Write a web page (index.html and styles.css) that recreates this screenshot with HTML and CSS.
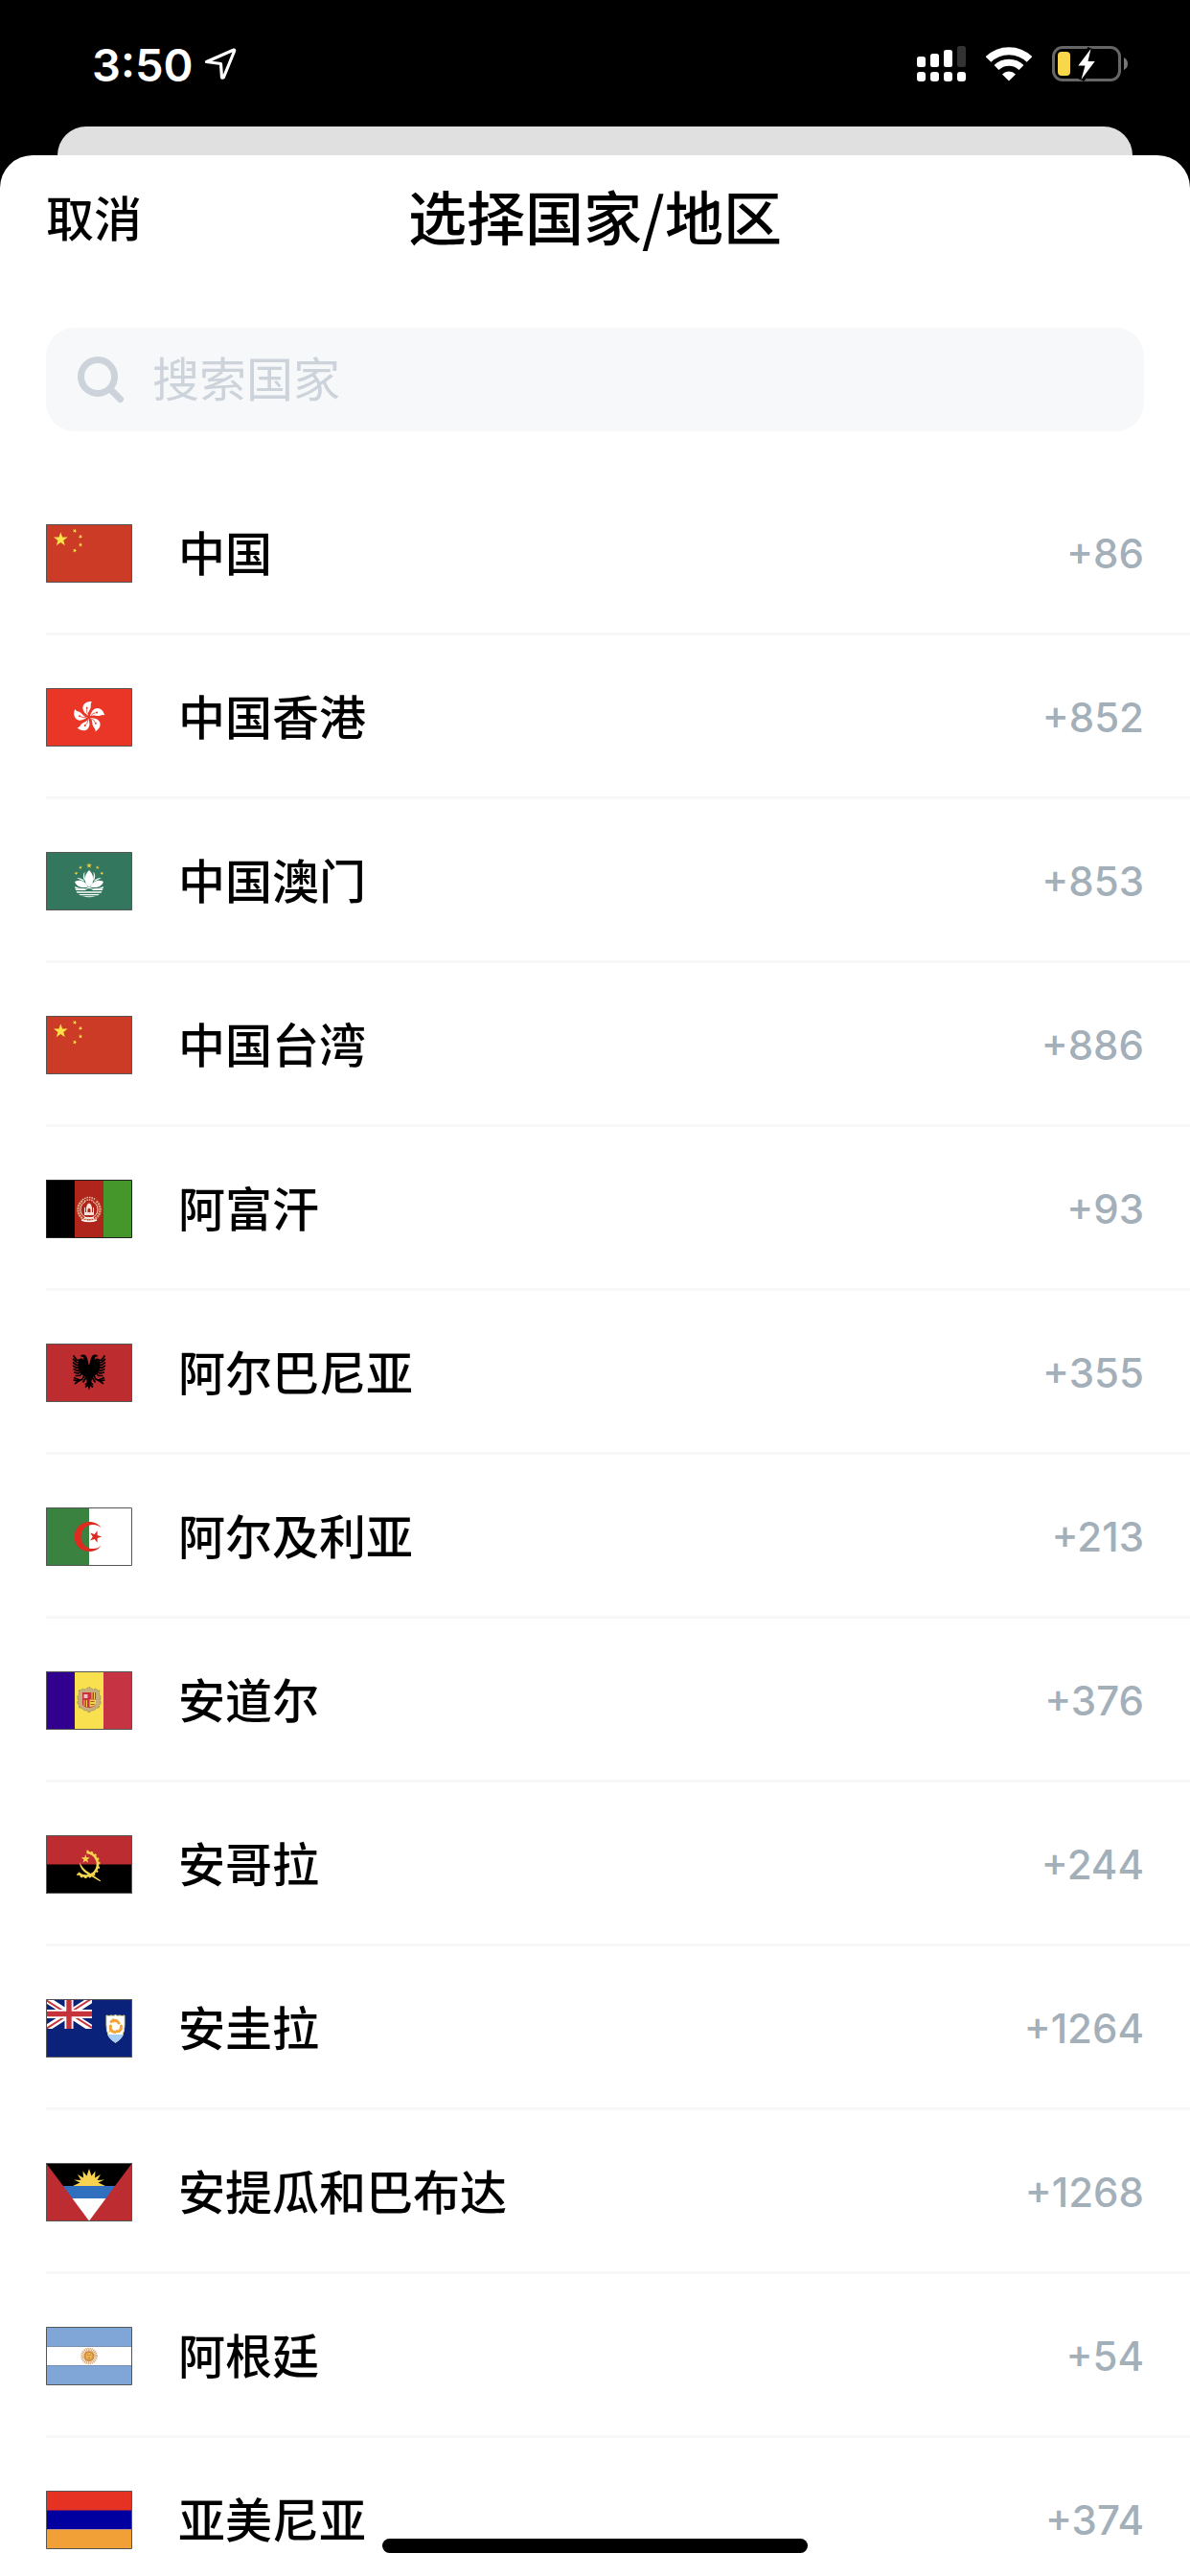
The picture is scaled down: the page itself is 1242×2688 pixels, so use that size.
FILE: index.html
```html
<!DOCTYPE html>
<html lang="zh-CN">
<head>
  <meta charset="UTF-8">
  <meta name="viewport" content="width=device-width, initial-scale=1.0">
  <title>选择国家/地区</title>
  <link rel="stylesheet" href="styles.css">
</head>
<body>
  <!-- shared shapes for the flags -->
  <svg class="defs" aria-hidden="true">
    <defs>
      <path id="star" d="M0-10 2.35-3.24 9.51-3.09 3.8 1.24 5.88 8.09 0 4-5.88 8.09-3.8 1.24-9.51-3.09-2.35-3.24z"/>
      <g id="flag-cn">
        <path fill="#cb3b25" d="M0 0h90v61H0z"/>
        <g fill="#fbdf4b">
          <use href="#star" transform="translate(15.3 16) scale(.77)"/>
          <use href="#star" transform="translate(30 7) rotate(25) scale(.24)"/>
          <use href="#star" transform="translate(36 13) rotate(45) scale(.24)"/>
          <use href="#star" transform="translate(36 21.5) scale(.24)"/>
          <use href="#star" transform="translate(30 27.5) rotate(20) scale(.24)"/>
        </g>
      </g>
      <g id="petal">
        <path fill="#fff" d="M-.500-1.500C-3.500-3.500-7.500-7-6-11.500-4.500-15.500-.5-16.500 3.300-16.300 1.200-14 2.600-12 1.800-9.500 1-7-1.500-5-.5-1.500z"/>
        <path fill="none" stroke="#e93626" stroke-width=".7" d="M-.800-2.500Q-3-5-2-9"/>
        <circle cx="-2" cy="-9.500" r="1" fill="#e93626"/>
      </g>
      <g id="eagle-half">
        <path d="M0-7.500C-1-9-1-14-3.500-17.500-5-19-8-18.800-9.500-17L-6.500-16-5.500-13-8-14.800-11-13.500-11.500-8C-11.500-2-8 3-3.500 5L-1.500 13 0 19z"/>
        <path fill="none" stroke="#000" stroke-width="1.700" d="M-9-12-13-13-16.500-17.500M-9-10-13-10.500-17-14M-9-8-13-7.500-17-10.500M-9-6-13-4.500-17-7M-9-4-12-1.500-16.500-3.500M-8-2-11 1-16 0M-7 0-9.500 3.500-14.500 3.500M-4 2-7 7-11 9-16.500 8M-11 9-15 12M-10 8-16 5.500M-3 5-6.500 10.500M0 9-4 13M0 12-4 15.500"/>
      </g>
      <path id="frame" fill="none" stroke="#555" stroke-width="1" d="M.5.5h89v60H.5z"/>
    </defs>
  </svg>

  <div class="status-bar">
    <div class="status-left">
      <span class="time">3:50</span>
      <svg width="34" height="34" viewBox="0 0 34 34" aria-hidden="true">
        <path d="M31 2 2.500 14.500 17.500 16.500 18.500 31Q19.500 31.500 20.500 30.500L31.500 3.500Q32 2 31 2z" fill="none" stroke="#fff" stroke-width="3.200" stroke-linejoin="round"/>
      </svg>
    </div>
    <div class="status-right">
      <svg width="51" height="38" viewBox="0 0 51 38" fill="#fff" aria-hidden="true">
        <rect x="0" y="11" width="9" height="11" rx="2.500"/>
        <rect x="14" y="8" width="9" height="14" rx="2.500"/>
        <rect x="28" y="4" width="9" height="18" rx="2.500"/>
        <rect x="42" y="0" width="9" height="22" rx="2.500" fill="#333"/>
        <rect x="0" y="27" width="9" height="10" rx="3"/>
        <rect x="14" y="27" width="9" height="10" rx="3"/>
        <rect x="28" y="27" width="9" height="10" rx="3"/>
        <rect x="42" y="27" width="9" height="10" rx="3"/>
      </svg>
      <svg width="48" height="38" viewBox="0 0 48 38" aria-hidden="true">
        <g fill="none" stroke="#fff">
          <path stroke-width="8" d="M2.500 14A30.500 30.500 0 0 1 45.500 14"/>
          <path stroke-width="7" d="M11 22.500A18.500 18.500 0 0 1 37 22.500"/>
        </g>
        <path fill="#fff" d="M17 29.500A9.800 9.800 0 0 1 31 29.500L24.500 36Q24 36.400 23.500 36z"/>
      </svg>
      <svg width="79" height="38" viewBox="0 0 79 38" aria-hidden="true">
        <rect x="1.500" y="1.500" width="69" height="34" rx="9.500" fill="none" stroke="#666" stroke-width="3"/>
        <path fill="#777" d="M75 12Q79 14 79 18.500T75 25z"/>
        <rect x="6" y="6" width="13" height="25" rx="4" fill="#f8d84a"/>
        <path fill="#fff" stroke="#000" stroke-width="7" paint-order="stroke" d="M40.500 3 27.300 20.500H34.500L30.500 35 44.700 16H37.500z"/>
      </svg>
    </div>
  </div>

  <div class="behind-card"></div>

  <main class="sheet">
    <header class="sheet-header">
      <button class="cancel" type="button">取消</button>
      <h1 class="title">选择国家/地区</h1>
    </header>

    <label class="search">
      <svg width="50" height="50" viewBox="0 0 50 50" fill="none" stroke="#cdd3da" stroke-width="7" stroke-linecap="round" aria-hidden="true">
        <circle cx="22" cy="22" r="17.500"/>
        <path d="M35 35 45.500 45.500"/>
      </svg>
      <input class="search-input" type="text" placeholder="搜索国家" aria-label="搜索国家">
    </label>

    <ul class="country-list">
      <li><button class="country" type="button">
        <svg class="flag" viewBox="0 0 90 61" aria-hidden="true"><use href="#flag-cn"/><use href="#frame"/></svg>
        <span class="name">中国</span><span class="code">+86</span>
      </button></li>

      <li><button class="country" type="button">
        <svg class="flag" viewBox="0 0 90 61" aria-hidden="true">
          <path fill="#e93626" d="M0 0h90v61H0z"/>
          <g transform="translate(44.700 30.300)">
            <use href="#petal"/>
            <use href="#petal" transform="rotate(72)"/>
            <use href="#petal" transform="rotate(144)"/>
            <use href="#petal" transform="rotate(216)"/>
            <use href="#petal" transform="rotate(288)"/>
          </g>
          <use href="#frame"/>
        </svg>
        <span class="name">中国香港</span><span class="code">+852</span>
      </button></li>

      <li><button class="country" type="button">
        <svg class="flag" viewBox="0 0 90 61" aria-hidden="true">
          <path fill="#34775f" d="M0 0h90v61H0z"/>
          <g fill="#f0ce3c">
            <use href="#star" transform="translate(45 14.300) scale(.3)"/>
            <use href="#star" transform="translate(36 16.300) rotate(-15) scale(.2)"/>
            <use href="#star" transform="translate(53.700 16.300) rotate(15) scale(.2)"/>
            <use href="#star" transform="translate(31.500 22.300) rotate(-30) scale(.2)"/>
            <use href="#star" transform="translate(58.300 22.300) rotate(30) scale(.2)"/>
          </g>
          <g fill="#fff">
            <path d="M45 19C41 23 40 27 41.500 33L45 37 48.500 33C50 27 49 23 45 19z"/>
            <path d="M40.500 20.500Q37.500 24 40 30L41 29Q39.500 24 40.500 20.500zM49.500 20.500Q52.500 24 50 30L49 29Q50.500 24 49.500 20.500z"/>
            <path d="M30 31C36 28 41 31 44 36.500 38 38 32 37 30 31zM60 31C54 28 49 31 46 36.500 52 38 58 37 60 31z"/>
            <path d="M32 27Q38 27 40.500 31L38 30Q35 28.500 32 27zM58 27Q52 27 49.500 31L52 30Q55 28.500 58 27z"/>
            <path d="M30 36Q36 39 42 38L45 36.500 48 38Q54 39 60 36L59.500 38Q51 40 45 38 39 40 30.500 38z"/>
            <path d="M30.500 38.500H40L42.500 40H31zM59.500 38.500H50L47.500 40H59zM31.500 41.200H58.500L57.500 42.700H32.500zM34 43.900H56L54 45.200H36zM38 46.200H52Q45 48.500 38 46.200z"/>
          </g>
          <use href="#frame"/>
        </svg>
        <span class="name">中国澳门</span><span class="code">+853</span>
      </button></li>

      <li><button class="country" type="button">
        <svg class="flag" viewBox="0 0 90 61" aria-hidden="true"><use href="#flag-cn"/><use href="#frame"/></svg>
        <span class="name">中国台湾</span><span class="code">+886</span>
      </button></li>

      <li><button class="country" type="button">
        <svg class="flag" viewBox="0 0 90 61" aria-hidden="true">
          <path fill="#000" d="M0 0h30v61H0z"/>
          <path fill="#b0251b" d="M30 0h30v61H30z"/>
          <path fill="#45962b" d="M60 0h30v61H60z"/>
          <g fill="none" transform="translate(45 31)">
            <path stroke="#dfa27b" stroke-width="2.600" stroke-dasharray="2 .7" d="M-7-9A11.500 11.500 0 1 0 7-9"/>
            <path stroke="#f5e3d5" stroke-width="1" d="M-4-8A9 9 0 1 0 4-8"/>
            <path stroke="#ecc5ae" stroke-width="1.500" stroke-dasharray="1.500 1" d="M-7-10Q0-15 7-10M-5-8.500Q0-11.500 5-8.500"/>
            <path stroke="#fff" stroke-width="1.500" d="M-8 11Q0 14 8 11M-5 9H5"/>
            <path fill="#f7e2d8" d="M-5 6V-2H-4V3H-3V-2L-2-5Q0-8 2-5L3-2V3H4V-2H5V6z"/>
            <path fill="#b0251b" d="M-1.500 3V0Q0-2.500 1.500 0V3z"/>
          </g>
          <path fill="none" stroke="#222" d="M.5.5h89v60H.5z"/>
        </svg>
        <span class="name">阿富汗</span><span class="code">+93</span>
      </button></li>

      <li><button class="country" type="button">
        <svg class="flag" viewBox="0 0 90 61" aria-hidden="true">
          <path fill="#bd2d30" d="M0 0h90v61H0z"/>
          <g transform="translate(45 30)">
            <use href="#eagle-half"/>
            <use href="#eagle-half" transform="scale(-1 1)"/>
          </g>
          <use href="#frame"/>
        </svg>
        <span class="name">阿尔巴尼亚</span><span class="code">+355</span>
      </button></li>

      <li><button class="country" type="button">
        <svg class="flag" viewBox="0 0 90 61" aria-hidden="true">
          <path fill="#fff" d="M0 0h90v61H0z"/>
          <path fill="#39823f" d="M0 0h45v61H0z"/>
          <path fill="#dc2b20" d="M58 21.500A15.600 15.600 0 1 0 58 39.500 12.600 12.600 0 1 1 58 21.500z"/>
          <use href="#star" fill="#dc2b20" transform="translate(51.500 30.500) rotate(90) scale(.67)"/>
          <use href="#frame"/>
        </svg>
        <span class="name">阿尔及利亚</span><span class="code">+213</span>
      </button></li>

      <li><button class="country" type="button">
        <svg class="flag" viewBox="0 0 90 61" aria-hidden="true">
          <path fill="#32008f" d="M0 0h30v61H0z"/>
          <path fill="#f8e04f" d="M30 0h30v61H30z"/>
          <path fill="#c63343" d="M60 0h30v61H60z"/>
          <path fill="#c5ae7b" stroke="#a48e5b" stroke-width="1" stroke-dasharray="2 1" d="M34 20Q37 20 38 18 41 20 43 17.500L45 16.500 47 17.500Q49 20 52 18 53 20 56 20 54.500 24 57.500 27 55.500 30 57.500 33 54.500 36 55.500 38 52 38 50 41 47 40 45 43.500 43 40 40 41 38 38 34.500 38 35.500 36 32.500 33 34.500 30 32.500 27 35.500 24 34 20z"/>
          <path fill="#c8313e" d="M38 22H52V34Q52 37 45 38 38 37 38 34z"/>
          <path fill="#f0d34a" d="M45.500 29.500H52V34Q51.500 36.500 45.500 37zM39.500 30h1v6h-1zM42 30h1v7h-1zM47.500 22h1v7h-1zM50 22h1v7h-1z"/>
          <path fill="#f1c2bd" d="M39.500 24h4v4h-4z"/>
          <path fill="none" stroke="#a6552f" stroke-width="1.200" d="M46.500 31.500h4M46.500 34.500h4"/>
          <use href="#frame"/>
        </svg>
        <span class="name">安道尔</span><span class="code">+376</span>
      </button></li>

      <li><button class="country" type="button">
        <svg class="flag" viewBox="0 0 90 61" aria-hidden="true">
          <path fill="#bd2c30" d="M0 0h90v31H0z"/>
          <path fill="#000" d="M0 30.500h90V61H0z"/>
          <g fill="none" stroke="#f7d64f">
            <path stroke-width="2.600" d="M42.500 18A12.300 12.300 0 1 1 33.500 39.500"/>
            <path stroke-width="1.800" stroke-dasharray="2.200 2.400" d="M42.500 16.500A13.800 13.800 0 1 1 32.500 40.500"/>
          </g>
          <path fill="#f7d64f" d="M35 28Q38 35 45 39L56 46.500Q58 48 56.500 48.300L43 40.500Q35 35.500 35 28z"/>
          <use href="#star" fill="#f7d64f" transform="translate(41.300 24.800) scale(.48)"/>
          <use href="#frame"/>
        </svg>
        <span class="name">安哥拉</span><span class="code">+244</span>
      </button></li>

      <li><button class="country" type="button">
        <svg class="flag" viewBox="0 0 90 61" aria-hidden="true">
          <path fill="#0a2279" d="M0 0h90v61H0z"/>
          <svg width="48" height="31" viewBox="0 0 48 31">
            <path stroke="#fff" stroke-width="7" d="M0 0 48 31M48 0 0 31"/>
            <path stroke="#c63239" stroke-width="2" d="M0 1 22 15M48 30 26 16M47 0 25 14M0 31 22 17"/>
            <path stroke="#fff" stroke-width="9" d="M24 0V31M0 15.500H48"/>
            <path stroke="#c63239" stroke-width="5.400" d="M24 0V31M0 15.500H48"/>
          </svg>
          <path fill="#fff" stroke="#d8d47a" stroke-width="1" d="M63 17Q66 18 68 17 70.500 18 72.500 16.500 74.500 18 77 17 79 18 82 17V27Q82 40 72.500 45.500 63 40 63 27z"/>
          <path fill="#a7cdf9" d="M64 37H81Q78.500 42.500 72.500 45.200 66.500 42.500 64 37z"/>
          <g fill="none" stroke="#f2a33c" stroke-width="3" stroke-linecap="round">
            <path d="M68 23.500Q73 20.500 76 25"/>
            <path d="M78.500 28Q78.500 34.500 74 33.500"/>
            <path d="M72 34.500Q66 33.500 67.500 28"/>
            <path stroke-width="1.200" d="M70 20.500 70.500 24M77 32 80 31M66 34 69 32"/>
          </g>
          <use href="#frame"/>
        </svg>
        <span class="name">安圭拉</span><span class="code">+1264</span>
      </button></li>

      <li><button class="country" type="button">
        <svg class="flag" viewBox="0 0 90 61" aria-hidden="true">
          <path fill="#bd2c30" d="M0 0h90v61H0z"/>
          <path fill="#000" d="M0 0H90L72 24H18z"/>
          <path fill="#f7d34f" d="M28 24 35.500 20.500 29 17.500 36.500 18 33 12 39 15.500 38.500 8.500 42.500 13.500 45 6 47.500 13.500 51.500 8.500 51 15.500 57 12 53.500 18 61 17.500 54.500 20.500 62 24z"/>
          <path fill="#316fbf" d="M18 24H72L62.500 37H27.500z"/>
          <path fill="#fff" d="M27.500 37H62.500L45 60.500z"/>
          <use href="#frame"/>
        </svg>
        <span class="name">安提瓜和巴布达</span><span class="code">+1268</span>
      </button></li>

      <li><button class="country" type="button">
        <svg class="flag" viewBox="0 0 90 61" aria-hidden="true">
          <path fill="#7fa6d6" d="M0 0h90v61H0z"/>
          <path fill="#fff" d="M0 20.500h90v20H0z"/>
          <path stroke="#7691b4" stroke-width="1" d="M0 20.500h90M0 40.500h90"/>
          <circle cx="45" cy="30.500" r="7.200" fill="none" stroke="#d5a471" stroke-width="3.200" stroke-dasharray="1.100 .8"/>
          <circle cx="45" cy="30.500" r="5.500" fill="#cf8a3c"/>
          <circle cx="45" cy="30.500" r="3.500" fill="#eeb552"/>
          <path fill="none" stroke="#a5682c" stroke-width=".8" d="M43 29.500h1.300M45.700 29.500H47M43.800 32.300h2.400"/>
          <use href="#frame"/>
        </svg>
        <span class="name">阿根廷</span><span class="code">+54</span>
      </button></li>

      <li><button class="country" type="button">
        <svg class="flag" viewBox="0 0 90 61" aria-hidden="true">
          <path fill="#e63223" d="M0 0h90v21H0z"/>
          <path fill="#0000a0" d="M0 20.500h90v20H0z"/>
          <path fill="#f19f37" d="M0 40.500h90V61H0z"/>
          <use href="#frame"/>
        </svg>
        <span class="name">亚美尼亚</span><span class="code">+374</span>
      </button></li>
    </ul>
  </main>

  <div class="home-indicator"></div>
</body>
</html>
```

FILE: styles.css
```css
* {
  box-sizing: border-box;
}
html, body {
  height: 100%;
}
body {
  margin: 0;
  display: flex;
  flex-direction: column;
  overflow: hidden;
  background-color: #000;
  color: #000;
  font-family: Inter, "Noto Sans CJK SC", sans-serif;
}
button, input {
  font-family: inherit;
  color: inherit;
  background: none;
  border: none;
  padding: 0;
}
button {
  cursor: pointer;
}
svg {
  display: block;
  flex-shrink: 0;
}
.defs {
  position: absolute;
  width: 0;
  height: 0;
}

/* status bar */
.status-bar {
  flex-shrink: 0;
  height: 132px;
  padding: 2px 65px 0 96px;
  display: flex;
  align-items: center;
  justify-content: space-between;
  color: #fff;
}
.status-left {
  display: flex;
  align-items: center;
  gap: 12px;
}
.status-right {
  display: flex;
  align-items: center;
  gap: 21px;
}
.time {
  font-size: 47px;
  font-weight: 600;
}

/* edge of the page underneath the sheet */
.behind-card {
  flex-shrink: 0;
  height: 30px;
  margin: 0 60px;
  background-color: #e0e0e0;
  border-radius: 30px 30px 0 0;
}

.sheet {
  flex: 1;
  min-height: 0;
  display: flex;
  flex-direction: column;
  background-color: #fff;
  border-radius: 34px 34px 0 0;
}
.sheet-header {
  flex-shrink: 0;
  height: 132px;
  padding: 0 48px 7px;
  display: grid;
  grid-template-columns: 1fr auto 1fr;
  align-items: center;
}
.cancel {
  justify-self: start;
  font-size: 50px;
  font-weight: 500;
}
.title {
  margin: 0;
  font-family: "Noto Sans CJK SC", sans-serif;
  font-size: 61px;
  font-weight: 500;
}

.search {
  flex-shrink: 0;
  height: 108px;
  margin: 48px 48px 42px;
  padding: 0 32px;
  display: flex;
  align-items: center;
  gap: 29px;
  background-color: #f7f8fa;
  border-radius: 30px;
}
.search-input {
  flex: 1;
  min-width: 0;
  font-size: 49px;
  outline: none;
}
.search-input::placeholder {
  color: #cdd3da;
  opacity: 1;
}

.country-list {
  flex: 1;
  min-height: 0;
  margin: 0;
  padding: 0 0 0 48px;
  list-style: none;
  overflow-y: auto;
  scrollbar-width: none;
}
.country {
  width: 100%;
  height: 171px;
  padding: 3px 48px 0 0;
  display: flex;
  align-items: center;
  border-bottom: 3px solid #f7f7f8;
  text-align: left;
}
.flag {
  width: 90px;
  height: 61px;
  border-radius: 1px;
}
.name {
  flex: 1;
  margin-left: 48px;
  padding-bottom: 6px;
  font-size: 49px;
  font-weight: 500;
}
.code {
  font-size: 42px;
  font-weight: 500;
  color: #a3afb9;
}

.home-indicator {
  position: fixed;
  left: 50%;
  bottom: 24px;
  width: 444px;
  height: 15px;
  margin-left: -222px;
  background-color: #000;
  border-radius: 8px;
}
```
